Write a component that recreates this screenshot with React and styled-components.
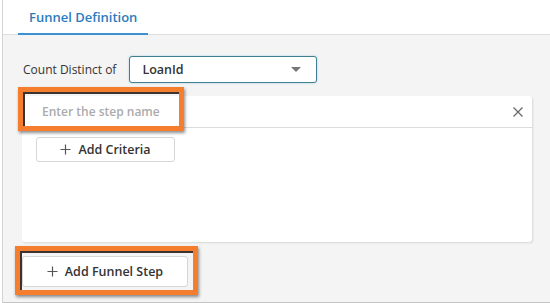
import styled, { createGlobalStyle } from "styled-components";

const GlobalStyle = createGlobalStyle`
  html, body {
    margin: 0;
    padding: 0;
    background: #fff;
  }
  body {
    font-family: "Open Sans", "Liberation Sans", sans-serif;
    -webkit-font-smoothing: antialiased;
  }
`;

const Page = styled.div`
  width: 547px;
  height: 302px;
  margin-left: 2px;
  border-left: 1px solid #d4d4d4;
  border-bottom: 1px solid #c4c4c4;
  display: flex;
  flex-direction: column;
  overflow: hidden;
`;

const TabBar = styled.div`
  height: 34px;
  flex-shrink: 0;
  background: #fff;
  border-bottom: 1px solid #dedede;
  display: flex;
  padding-left: 15px;
`;

const Tab = styled.div`
  display: flex;
  align-items: center;
  padding: 0 11px;
  margin-bottom: -1px;
  font-size: 13px;
  font-weight: 600;
  color: #2b7cbd;
  border-bottom: 2px solid ${(p) => (p.$active ? "#3d91d3" : "transparent")};
`;

const Content = styled.div`
  flex: 1;
  background: #f4f4f4;
  padding: 21px 18px 0 19px;
  display: flex;
  flex-direction: column;
`;

const FieldRow = styled.div`
  display: flex;
  align-items: center;
  gap: 13px;
  margin-left: 1px;
`;

const Label = styled.span`
  font-size: 12px;
  color: #333;
`;

const Select = styled.div`
  width: 188px;
  height: 27px;
  box-sizing: border-box;
  border: 1px solid #3f7f90;
  border-radius: 3px;
  box-shadow: 0 0 2px rgba(90, 170, 215, 0.6);
  background: #fff;
  display: flex;
  align-items: center;
  justify-content: space-between;
  padding: 0 15px 0 12px;
  font-size: 12.5px;
  font-weight: 600;
  color: #333;
`;

const Caret = styled.span`
  width: 0;
  height: 0;
  border-left: 5px solid transparent;
  border-right: 5px solid transparent;
  border-top: 5px solid #777;
`;

const Card = styled.div`
  margin-top: 13px;
  height: 146px;
  background: #fff;
  border-radius: 3px;
  box-shadow: 1px 1px 2px rgba(0, 0, 0, 0.12);
  display: flex;
  flex-direction: column;
`;

const CardHeader = styled.div`
  height: 31px;
  flex-shrink: 0;
  border-bottom: 1px solid #dcdcdc;
  display: flex;
  align-items: center;
  justify-content: space-between;
  padding-right: 7px;
`;

const Highlight = styled.div`
  position: relative;
  display: flex;
  &::after {
    content: "";
    position: absolute;
    top: ${(p) => p.$top}px;
    left: ${(p) => p.$left}px;
    right: ${(p) => p.$right}px;
    bottom: ${(p) => p.$bottom}px;
    border: 5px solid #f47d2e;
    box-shadow: inset 1px 1px 0 1px #3a3330, 1px 2px 3px rgba(0, 0, 0, 0.45);
    pointer-events: none;
  }
`;

const StepInput = styled.input`
  width: 154px;
  height: 31px;
  box-sizing: border-box;
  border: none;
  outline: none;
  background: transparent;
  padding: 0 0 0 20px;
  font-family: inherit;
  font-size: 12px;
  font-weight: 600;
  color: #333;
  &::placeholder {
    color: #ababab;
  }
`;

const CloseButton = styled.button`
  border: none;
  background: none;
  padding: 0;
  width: 14px;
  height: 14px;
  display: flex;
  align-items: center;
  justify-content: center;
`;

const CardBody = styled.div`
  padding: 9px 14px;
`;

const Button = styled.button`
  display: flex;
  align-items: center;
  justify-content: center;
  gap: 7px;
  width: ${(p) => p.$width}px;
  height: ${(p) => p.$height}px;
  background: #fff;
  border: 1px solid #d6d6d6;
  border-radius: 3px;
  font-family: inherit;
  font-size: 12.5px;
  font-weight: 600;
  color: #333;
  padding: 0;
`;

const Footer = styled.div`
  margin-top: 14px;
  display: flex;
`;

const Plus = () => (
  <svg width="11" height="11" viewBox="0 0 11 11">
    <path d="M5.5 0.5v10M0.5 5.5h10" stroke="#555" strokeWidth="1.2" />
  </svg>
);

const CloseIcon = () => (
  <svg width="10" height="10" viewBox="0 0 10 10">
    <path d="M0.5 0.5l9 9M9.5 0.5l-9 9" stroke="#666" strokeWidth="1.2" />
  </svg>
);

export default function App() {
  return (
    <>
      <GlobalStyle />
      <Page>
        <TabBar>
          <Tab $active>Funnel Definition</Tab>
        </TabBar>
        <Content>
          <FieldRow>
            <Label>Count Distinct of</Label>
            <Select>
              LoanId
              <Caret />
            </Select>
          </FieldRow>
          <Card>
            <CardHeader>
              <Highlight $top={-9} $left={-4} $right={-8} $bottom={-4}>
                <StepInput placeholder="Enter the step name" />
              </Highlight>
              <CloseButton>
                <CloseIcon />
              </CloseButton>
            </CardHeader>
            <CardBody>
              <Button $width={139} $height={25}>
                <Plus />
                Add Criteria
              </Button>
            </CardBody>
          </Card>
          <Footer>
            <Highlight $top={-10} $left={-7} $right={-10} $bottom={-8}>
              <Button $width={166} $height={31}>
                <Plus />
                Add Funnel Step
              </Button>
            </Highlight>
          </Footer>
        </Content>
      </Page>
    </>
  );
}
